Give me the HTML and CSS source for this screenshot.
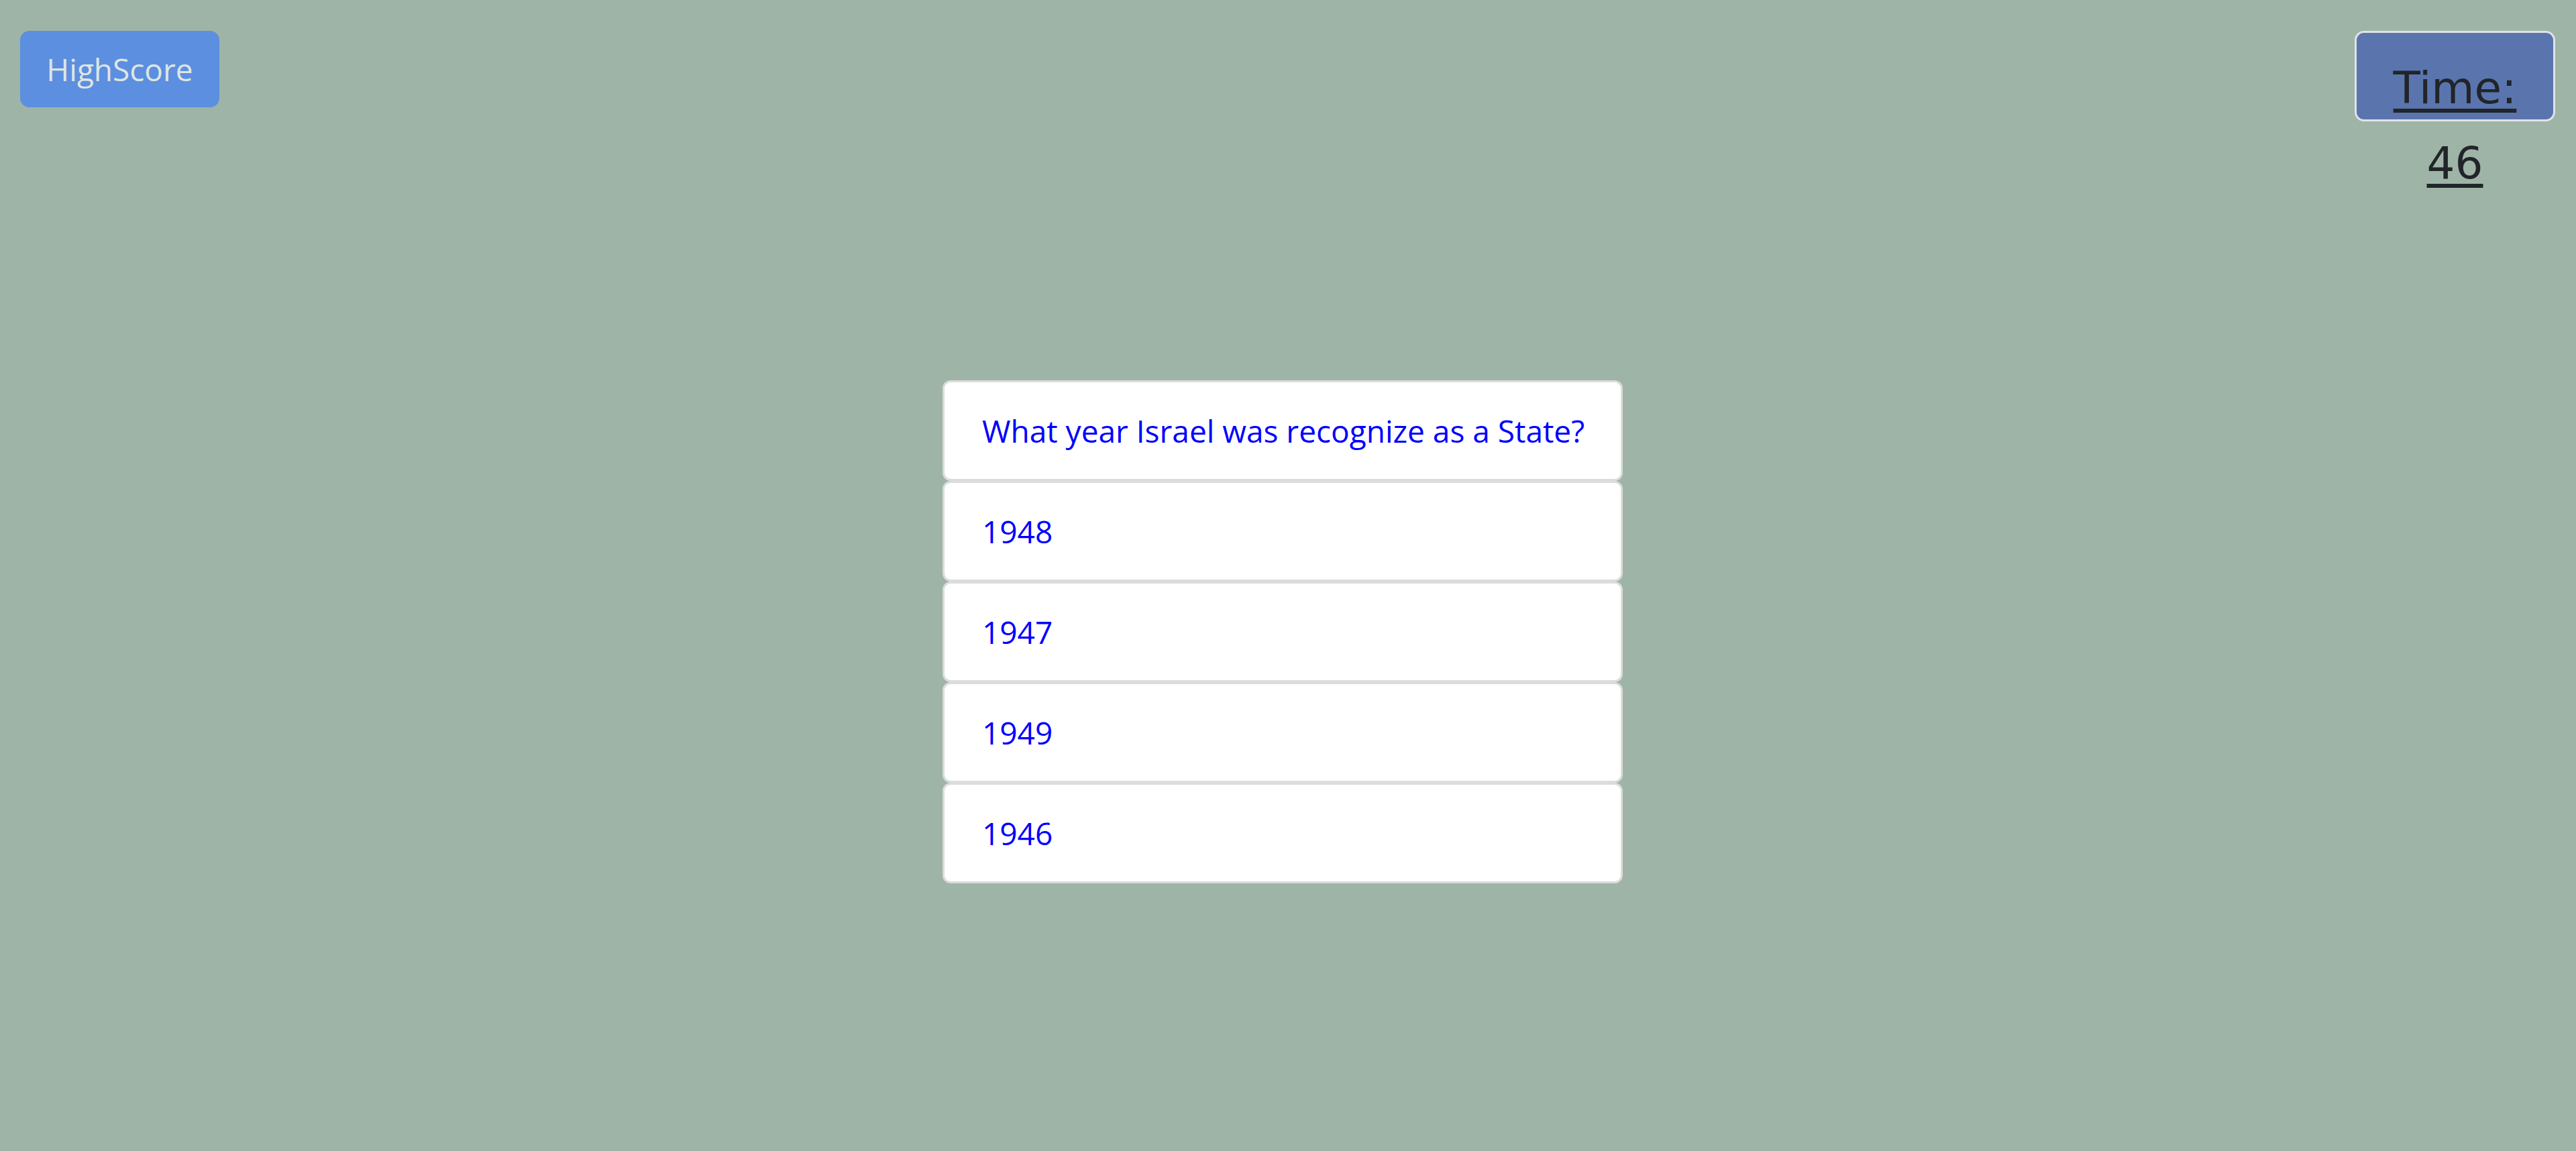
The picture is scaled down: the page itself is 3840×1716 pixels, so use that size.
FILE: index.html
```html
<!DOCTYPE html>
<html lang="en">
<head>
    <meta charset="UTF-8">
    <meta name="viewport" content="width=device-width, initial-scale=1.0">
    <title>Quiz</title>
    <link rel="stylesheet" href="styles.css">
</head>
<body>
<div class="top-bar">
    <button class="highscore-btn" type="button">HighScore</button>
    <div class="timer">
        <h2 class="timer-text">Time: 46</h2>
    </div>
</div>

<div class="quiz">
    <ul class="question-list">
        <li class="question-item question">What year Israel was recognize as a State?</li>
        <li class="question-item">1948</li>
        <li class="question-item">1947</li>
        <li class="question-item">1949</li>
        <li class="question-item">1946</li>
    </ul>
</div>
</body>
</html>
```

FILE: styles.css
```css
body {
    margin: 0;
    padding: 0;
    background-color: #9eb4a7;
    font-family: "Segoe UI", "Open Sans", "Noto Sans", sans-serif;
}

.top-bar {
    display: flex;
    justify-content: space-between;
    align-items: flex-start;
    padding: 46px 31px 0 30px;
}

.highscore-btn {
    box-sizing: border-box;
    width: 297px;
    height: 114px;
    padding: 0;
    background-color: #5c8fe0;
    color: #dfe5e2;
    border: none;
    border-radius: 14px;
    font-family: "Segoe UI", "Open Sans", "Noto Sans", sans-serif;
    font-size: 46px;
    cursor: pointer;
}

.timer {
    box-sizing: border-box;
    width: 299px;
    height: 135px;
    padding-top: 27px;
    background-color: #5a75ae;
    border: 3px solid #e1e2e8;
    border-radius: 14px;
    text-align: center;
}

.timer-text {
    margin: 0;
    padding: 0 50px;
    font-family: "Comic Sans MS", "DejaVu Sans", sans-serif;
    font-size: 66px;
    font-weight: normal;
    line-height: 112px;
    color: #212529;
    text-decoration: underline;
    text-decoration-thickness: 6px;
    text-underline-offset: 8px;
}

.quiz {
    display: flex;
    justify-content: center;
    padding-right: 16px;
    margin-top: 386px;
}

.question-list {
    list-style: none;
    margin: 0;
    padding: 0;
    width: 1014px;
}

.question-item {
    box-sizing: border-box;
    height: 150px;
    padding: 36px 56px;
    background-color: #ffffff;
    border: 3px solid #dcdcdc;
    border-radius: 12px;
    color: #0000ff;
    font-size: 46px;
    line-height: 72px;
    white-space: nowrap;
}
```
